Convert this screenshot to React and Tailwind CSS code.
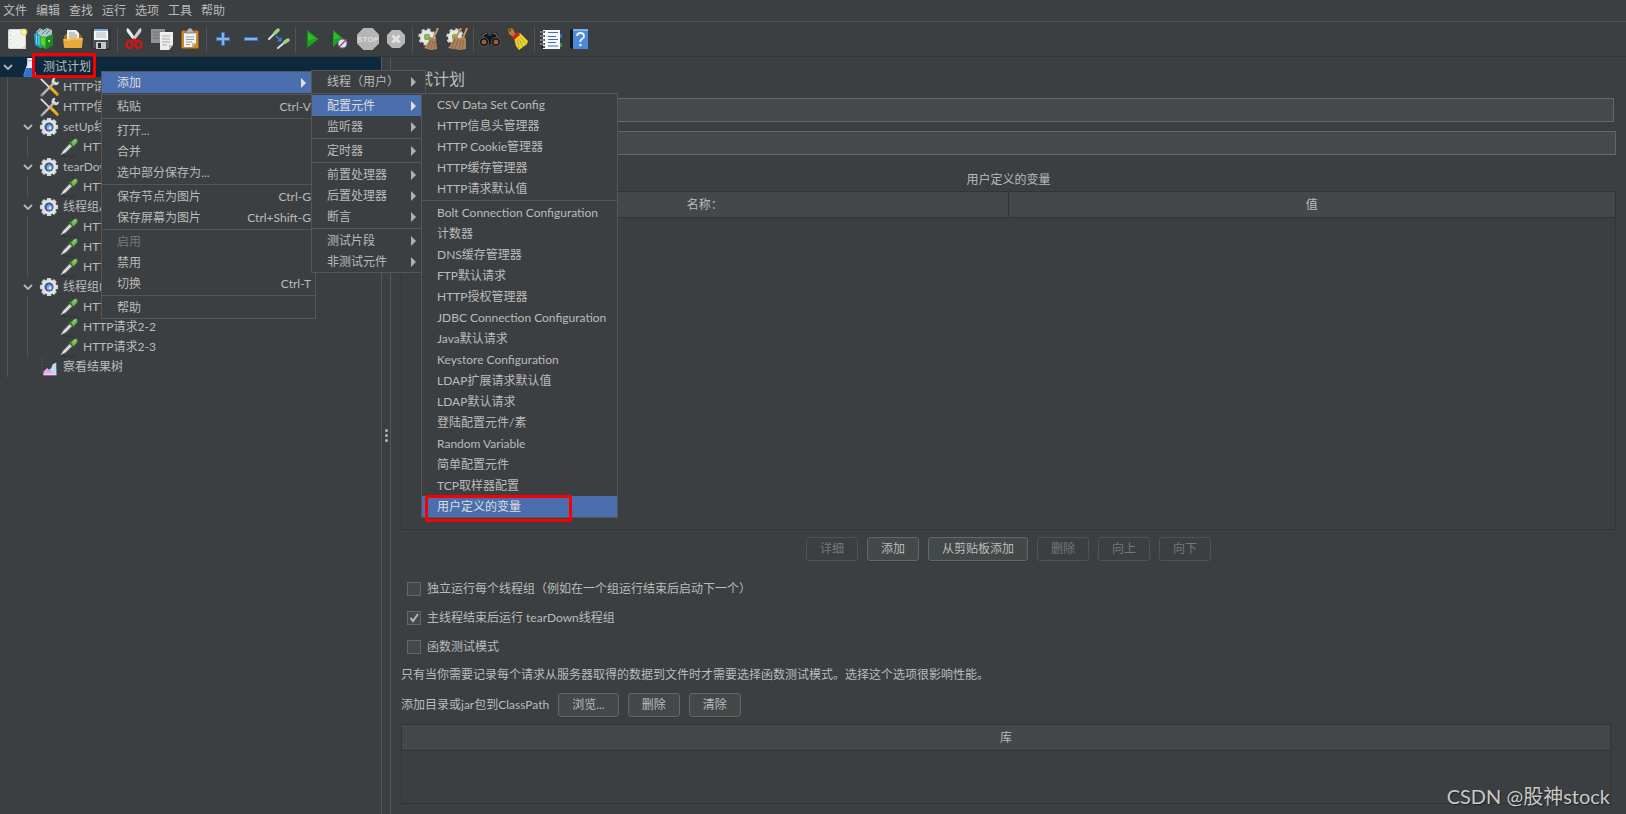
import { useState } from "react";
import clsx from "clsx";

function Icon({ size = 22, children }) {
  return (
    <svg width={size} height={size} viewBox="0 0 22 22" fill="none" aria-hidden="true" className="shrink-0 block">
      {children}
    </svg>
  );
}

// ── Toolbar icons ──
const NewIcon = () => (
  <Icon>
    <rect x="2.5" y="1.5" width="17" height="19" rx="1" fill="#f1f1ef" stroke="#d8d8d4" />
    <path d="M4.5 3v16" stroke="#c9c9c6" strokeDasharray="1 3" />
    <path d="M15 21h5v-5" fill="#d5d5d0" />
    <circle cx="18" cy="4" r="3.5" fill="#f0df5a" opacity=".75" />
    <circle cx="18" cy="4" r="1.8" fill="#fffbd0" />
  </Icon>
);

const TemplatesIcon = () => (
  <Icon>
    <path d="M0 6l5-3 8 1v14l-7 2-5-3z" fill="#1e9ec4" />
    <path d="M2 4l4-4 3 2 4-2 5 2v6l-9 2z" fill="#a9c6cc" />
    <path d="M3 5l4-4M8 6l5-5M12 6l4-4" stroke="#5d7f88" />
    <path d="M2.5 7v9M5 8v9" stroke="#7fd8f0" />
    <path d="M6 8l6 1 7-3v11l-7 4-6-3z" fill="#2fae2a" />
    <path d="M12 9l7-3v11l-7 4z" fill="#1c8a1c" />
    <path d="M7 9l4 1v8l-4-2z" fill="#56d446" />
    <circle cx="15" cy="13" r="1" fill="#c8f5c0" />
  </Icon>
);

const OpenIcon = () => (
  <Icon>
    <path d="M2 8l2-2h14l2 3v10H2z" fill="#a87413" />
    <path d="M5 2h9l3 3v7H5z" fill="#efefed" />
    <path d="M7 5h6M7 7h8M7 9h8" stroke="#9a9a98" />
    <path d="M1 11h6l2-1h12l-1 9q0 1-1 1H3q-1 0-1-1z" fill="#e7a93a" />
    <path d="M2 12h6l2-1h10" stroke="#f7cf7c" />
  </Icon>
);

const SaveIcon = () => (
  <Icon>
    <path d="M2 2h18v19H4l-2-2z" fill="#4b4f55" stroke="#25282b" />
    <rect x="4" y="1" width="14" height="11" fill="#f4f4f4" />
    <path d="M4 1h14v2H4z" fill="#7aa7d9" />
    <path d="M6 5h10M6 7h10M6 9h10" stroke="#b4b8bd" />
    <rect x="6" y="14" width="10" height="7" fill="#c3c6c9" />
    <rect x="8" y="15" width="3" height="5" fill="#2b2d30" />
  </Icon>
);

const CutIcon = () => (
  <Icon>
    <path d="M4 0q-1 2 0 4l7 9 2-2L6 1z" fill="#ededed" />
    <path d="M18 0q1 2 0 4l-7 9-2-2 7-10z" fill="#cfcfcf" />
    <path d="M11 11l-3 3M11 11l3 3" stroke="#c71515" strokeWidth="2.4" />
    <ellipse cx="6.500" cy="16.500" rx="3" ry="3.400" stroke="#d81414" strokeWidth="2.400" />
    <ellipse cx="15.500" cy="16.500" rx="3" ry="3.400" stroke="#d81414" strokeWidth="2.400" />
  </Icon>
);

const CopyIcon = () => (
  <Icon>
    <path d="M0 1h14v14H0z" fill="#8f9294" />
    <path d="M2 4h9M2 7h6M2 10h6" stroke="#6f7274" />
    <path d="M9 4h13v13l-4 5H9z" fill="#eeeeec" />
    <path d="M11 8h8M11 11h8M11 14h8M11 17h5" stroke="#a9a9a7" />
    <path d="M22 17h-4v5z" fill="#bdbdbb" />
  </Icon>
);

const PasteIcon = () => (
  <Icon>
    <rect x="2.5" y="2.5" width="17" height="18" rx="1.5" fill="#c98a2b" stroke="#8f5b10" />
    <path d="M5 5h12v10l-4 4H5z" fill="#f3f3f1" />
    <path d="M7 9h8M7 11.5h8M7 14h6M7 16.5h4" stroke="#9b9b99" />
    <path d="M17 15h-4v4z" fill="#b9b9b6" />
    <path d="M6 5q0-2 2-2 1-3 3-3t3 3q2 0 2 2z" fill="#b7babd" stroke="#585b5e" strokeWidth=".7" />
  </Icon>
);

const PlusIcon = () => (
  <Icon>
    <path d="M9.5 4.500h3v5h5v3h-5v5h-3v-5h-5v-3h5z" fill="#86b3ec" stroke="#3f73bd" />
  </Icon>
);

const MinusIcon = () => (
  <Icon>
    <rect x="4.5" y="9.5" width="13" height="3" fill="#86b3ec" stroke="#3f73bd" />
  </Icon>
);

const ToggleIcon = () => (
  <Icon>
    <path d="M1 11l6-6" stroke="#d8dadb" strokeWidth="2" strokeLinecap="round" />
    <path d="M7 5l3-3" stroke="#9bd07c" strokeWidth="3.5" strokeLinecap="round" />
    <path d="M10 20l7-6" stroke="#d8dadb" strokeWidth="2" strokeLinecap="round" />
    <path d="M17 14l3-2" stroke="#9bd07c" strokeWidth="3.5" strokeLinecap="round" />
    <path d="M8 8l4 4" stroke="#3b83e8" strokeWidth="1.6" />
    <path d="M13.5 9v4.500H9z" fill="#3b83e8" />
  </Icon>
);

const PlayIcon = () => (
  <Icon>
    <path d="M6 2v18l11.500-9z" fill="#1fa21f" />
    <path d="M6 2v18" stroke="#0e6e12" />
    <path d="M7 4.500v8l7-2z" fill="#4fd04a" opacity=".5" />
  </Icon>
);

const PlayNoPauseIcon = () => (
  <Icon>
    <path d="M4 2v17l9.500-9z" fill="#1fa21f" />
    <path d="M5 4.500v7l6-2z" fill="#4fd04a" opacity=".5" />
    <circle cx="13.500" cy="15.500" r="4.500" fill="#dbe7f5" stroke="#4176bd" />
    <path d="M10 19l8-8" stroke="#d83131" strokeWidth="1.300" />
  </Icon>
);

const StopIcon = () => (
  <Icon>
    <path d="M6.500 0h9L22 6.500v9L15.500 22h-9L0 15.500v-9z" fill="#b5b5b5" />
    <text
      x="11"
      y="14"
      textAnchor="middle"
      fontSize="8"
      fontFamily="'Liberation Sans', sans-serif"
      fontWeight="bold"
      fill="#dedede"
    >
      STOP
    </text>
  </Icon>
);

const ShutdownIcon = () => (
  <Icon>
    <path d="M7 2h8l5 5v8l-5 5H7l-5-5V7z" fill="#b7b7b7" />
    <path d="M7.500 7.500l7 7M14.500 7.500l-7 7" stroke="#e2e2e2" strokeWidth="3" />
  </Icon>
);

const GearShape = () => (
  <>
    <circle cx="9" cy="9" r="7" stroke="#cfd0cc" strokeWidth="3.500" strokeDasharray="3 2.500" />
    <circle cx="9" cy="9" r="5" stroke="#e6e7e3" strokeWidth="4" />
    <circle cx="9" cy="9" r="3" fill="#7fc053" />
  </>
);

const ClearIcon = () => (
  <Icon>
    <GearShape />
    <path d="M20 0l-5 11" stroke="#c69468" strokeWidth="2" />
    <path d="M12 9l6 2 1 10-6 1-7-2q4-4 6-11z" fill="#b08660" />
    <path d="M13 12l-3 8M15 13l-2 8M17 13l-1 8" stroke="#805a38" strokeWidth=".8" />
  </Icon>
);

const ClearAllIcon = () => (
  <Icon>
    <GearShape />
    <path d="M15 0l-5 10M21 0l-4 10" stroke="#c69468" strokeWidth="2" />
    <path d="M8 8l5 2 5-1 2 2v10l-6 1-12-2q4-4 6-12z" fill="#b08660" />
    <path d="M9 11l-3 9M12 12l-3 9M15 12l-2 9M18 12l-2 9" stroke="#805a38" strokeWidth=".8" />
  </Icon>
);

const SearchIcon = () => (
  <Icon>
    <path d="M4 5l4-1 2 4h2l2-4 4 1 3 8v3H1v-3z" fill="#15181b" />
    <path d="M5 6l3-1M14 5l3 1M2 12l3-6M20 12l-3-6" stroke="#7b8085" />
    <circle cx="5" cy="14" r="4.500" fill="#101214" stroke="#55595d" />
    <circle cx="17" cy="14" r="4.500" fill="#101214" stroke="#55595d" />
    <circle cx="5" cy="14" r="2.500" fill="#9c5b38" />
    <circle cx="17" cy="14" r="2.500" fill="#9c5b38" />
  </Icon>
);

const SearchResetIcon = () => (
  <Icon>
    <path d="M1 2q2-3 5-1l3 6-3 2-4-3z" fill="#b9782c" />
    <circle cx="3" cy="2.500" r="1" fill="#5b3a12" />
    <path d="M7 10l6-5 8 8-1 3-4 3-4 3-3-4z" fill="#ead52f" />
    <path d="M10 12l2 8M12 11l4 8M13 9l6 7" stroke="#b39913" strokeWidth=".8" />
    <path d="M5 9l6-5 2 3-6 5z" fill="#cc2320" />
  </Icon>
);

const FunctionIcon = () => (
  <Icon>
    <path d="M18 6h4v4h-4z" fill="#3d6fc4" />
    <path d="M18 15h4v4h-4z" fill="#2e9e39" />
    <rect x="3" y="2" width="17" height="19" fill="#f7f7f7" />
    <path d="M1 4h4M1 8h4M1 12h4M1 16h4M1 19h4" stroke="#1c1c1c" strokeWidth="1.600" />
    <path d="M0 4h4M0 8h4M0 12h4M0 16h4" stroke="#e8e8e8" strokeWidth=".8" />
    <path d="M8 4.500h10M8 8.500h8M8 11.500h10M8 14.500h8M8 18h10" stroke="#3f6cb5" strokeWidth="1.200" />
  </Icon>
);

const HelpIcon = () => (
  <Icon>
    <path d="M2 2l3-1v20l-3-1z" fill="#11161d" />
    <rect x="5" y="1" width="15" height="20" fill="#4b8ad8" />
    <path d="M5 1h15v2H5z" fill="#7db0ef" />
    <path d="M9 8q0-3 3.500-3T16 8q0 2-2 3t-1.500 3" stroke="#f2f6fb" strokeWidth="1.800" />
    <circle cx="12.400" cy="17" r="1.200" fill="#f2f6fb" />
  </Icon>
);

// ── Tree icons ──
const FlaskIcon = () => (
  <Icon size={20}>
    <path d="M9 1h6v7l4 12q0 2-2 2H7q-2 0-2-2L9 8z" fill="#e4ecf5" />
    <path d="M8 12h8l3 8q0 2-2 2H7q-2 0-2-2z" fill="#2d74cf" />
    <path d="M9 4h6" stroke="#9fb0c2" />
  </Icon>
);

const ToolsIcon = () => (
  <Icon size={20}>
    <path d="M3 20l12-12" stroke="#8e9293" strokeWidth="3" strokeLinecap="round" />
    <path d="M4 19l11-11" stroke="#d0d3d3" strokeWidth="1.200" />
    <path d="M14 7q-1-4 2-6h2l-1 3 2 2 3-1q0 4-4 4z" fill="#d7d9d9" />
    <path d="M2 2l10 10" stroke="#dfe1e1" strokeWidth="1.800" />
    <path d="M13 12l7 7" stroke="#e3a41b" strokeWidth="3.400" strokeLinecap="round" />
    <path d="M13 11.500l6 6" stroke="#f8cf5c" />
  </Icon>
);

// eight stubby teeth around a light ring
const GearIcon = () => (
  <Icon size={20}>
    <g fill="#d3d5d7">
      {[0, 45, 90, 135].map((a) => (
        <rect key={a} x="8.500" y="1" width="5" height="20" rx="1" transform={`rotate(${a} 11 11)`} />
      ))}
    </g>
    <circle cx="11" cy="11" r="8" fill="#e3e4e6" />
    <circle cx="11" cy="11" r="5" fill="#37598c" />
    <circle cx="11.500" cy="11.500" r="3.200" fill="#7ea6dc" />
    <circle cx="12" cy="12" r="1.500" fill="#d6e6fa" />
  </Icon>
);

const DropperIcon = () => (
  <Icon size={20}>
    <path d="M3 21h16" stroke="#2a2c2d" opacity=".7" />
    <path d="M2 19.500l3-5 7-7 2.500 2.500-7 7z" fill="#c9cccc" stroke="#8f9393" strokeWidth=".7" />
    <path d="M4 18l8-8" stroke="#fff" />
    <path d="M11 5l6 6" stroke="#2f6e24" strokeWidth="2.200" />
    <path d="M13 6q4-5 6-4t1 4l-4 4z" fill="#76b95c" />
    <path d="M16 5l2-2" stroke="#b7e2a2" />
  </Icon>
);

const ChartIcon = () => (
  <Icon size={20}>
    <path d="M3.500 2v18" stroke="#6d7072" strokeDasharray="1 2" />
    <path d="M5 20v-4l4-4 4 4 6-3v7z" fill="#eba6e6" />
    <path d="M11 14q3-1 4-6l4-2v13l-4-1z" fill="#b9dbfb" />
    <path d="M5 20h14v-2H5z" fill="#f5c9ef" />
  </Icon>
);

const Chevron = () => (
  <svg width="10" height="6" viewBox="0 0 10 6" fill="none" aria-hidden="true">
    <path d="M1 1l4 4 4-4" stroke="#b4b4b4" strokeWidth="1.8" />
  </svg>
);

const MENUS = ["文件", "编辑", "查找", "运行", "选项", "工具", "帮助"];

const TOOLBAR = [
  [["新建", NewIcon], ["模板", TemplatesIcon], ["打开", OpenIcon], ["保存", SaveIcon]],
  [["剪切", CutIcon], ["复制", CopyIcon], ["粘贴", PasteIcon]],
  [["展开", PlusIcon], ["折叠", MinusIcon], ["切换", ToggleIcon]],
  [["启动", PlayIcon], ["不停顿启动", PlayNoPauseIcon], ["停止", StopIcon], ["关闭", ShutdownIcon]],
  [["清除", ClearIcon], ["清除全部", ClearAllIcon]],
  [["搜索", SearchIcon], ["重置搜索", SearchResetIcon]],
  [["函数助手", FunctionIcon], ["帮助", HelpIcon]],
];

const TREE = {
  label: "测试计划",
  icon: FlaskIcon,
  selected: true,
  children: [
    { label: "HTTP请求默认值", icon: ToolsIcon },
    { label: "HTTP信息头管理器", icon: ToolsIcon },
    { label: "setUp线程组", icon: GearIcon, children: [{ label: "HTTP请求", icon: DropperIcon }] },
    { label: "tearDown线程组", icon: GearIcon, children: [{ label: "HTTP请求", icon: DropperIcon }] },
    {
      label: "线程组A",
      icon: GearIcon,
      children: [
        { label: "HTTP请求1-1", icon: DropperIcon },
        { label: "HTTP请求1-2", icon: DropperIcon },
        { label: "HTTP请求1-3", icon: DropperIcon },
      ],
    },
    {
      label: "线程组B",
      icon: GearIcon,
      children: [
        { label: "HTTP请求2-1", icon: DropperIcon },
        { label: "HTTP请求2-2", icon: DropperIcon },
        { label: "HTTP请求2-3", icon: DropperIcon },
      ],
    },
    { label: "察看结果树", icon: ChartIcon },
  ],
};

// "-" is a separator
const CONTEXT_MENU = [
  { label: "添加", arrow: true, active: true },
  "-",
  { label: "粘贴", keys: "Ctrl-V" },
  "-",
  { label: "打开..." },
  { label: "合并" },
  { label: "选中部分保存为..." },
  "-",
  { label: "保存节点为图片", keys: "Ctrl-G" },
  { label: "保存屏幕为图片", keys: "Ctrl+Shift-G" },
  "-",
  { label: "启用", disabled: true },
  { label: "禁用" },
  { label: "切换", keys: "Ctrl-T" },
  "-",
  { label: "帮助" },
];

const ADD_MENU = [
  { label: "线程（用户）", arrow: true },
  "-",
  { label: "配置元件", arrow: true, active: true },
  { label: "监听器", arrow: true },
  "-",
  { label: "定时器", arrow: true },
  "-",
  { label: "前置处理器", arrow: true },
  { label: "后置处理器", arrow: true },
  { label: "断言", arrow: true },
  "-",
  { label: "测试片段", arrow: true },
  { label: "非测试元件", arrow: true },
];

const CONFIG_MENU = [
  { label: "CSV Data Set Config" },
  { label: "HTTP信息头管理器" },
  { label: "HTTP Cookie管理器" },
  { label: "HTTP缓存管理器" },
  { label: "HTTP请求默认值" },
  "-",
  { label: "Bolt Connection Configuration" },
  { label: "计数器" },
  { label: "DNS缓存管理器" },
  { label: "FTP默认请求" },
  { label: "HTTP授权管理器" },
  { label: "JDBC Connection Configuration" },
  { label: "Java默认请求" },
  { label: "Keystore Configuration" },
  { label: "LDAP扩展请求默认值" },
  { label: "LDAP默认请求" },
  { label: "登陆配置元件/素" },
  { label: "Random Variable" },
  { label: "简单配置元件" },
  { label: "TCP取样器配置" },
  { label: "用户定义的变量", active: true },
];

function TreeNode({ node }) {
  const NodeIcon = node.icon;
  return (
    <li>
      <div className={clsx("flex h-5 items-center", node.selected ? "bg-[#0d293e]" : "pl-3")}>
        <span className="flex w-[15px] justify-center">{node.children && <Chevron />}</span>
        <span className="ml-1 mr-1 w-5">
          <NodeIcon />
        </span>
        <span className="whitespace-nowrap">{node.label}</span>
      </div>
      {node.children && (
        <ul className={clsx("border-l border-[#525658]", node.selected ? "ml-[7px]" : "ml-[19px]")}>
          {node.children.map((child, i) => (
            <TreeNode key={i} node={child} />
          ))}
        </ul>
      )}
    </li>
  );
}

function PopupMenu({ items, label, className }) {
  return (
    <div role="menu" aria-label={label} className={clsx("absolute border border-[#565656] bg-[#3c3f41]", className)}>
      {items.map((item, i) =>
        item === "-" ? (
          <div key={i} role="separator" className="py-px">
            <div className="h-px bg-[#565656]" />
          </div>
        ) : (
          <button
            key={i}
            type="button"
            role="menuitem"
            disabled={item.disabled}
            className={clsx(
              "flex h-[21px] w-full items-center justify-between pl-[15px] text-left whitespace-nowrap",
              item.arrow ? "pr-2" : "pr-1",
              item.active && "bg-[#4b6eaf] text-[#dddddd]",
              item.disabled && "text-[#777777]"
            )}
          >
            <span>{item.label}</span>
            {item.keys && <span>{item.keys}</span>}
            {item.arrow && (
              <svg width="6" height="10" viewBox="0 0 6 10" aria-hidden="true">
                <path d="M0 0l5 5-5 5z" fill={item.active ? "#e0e0e0" : "#b0b0b0"} />
              </svg>
            )}
          </button>
        )
      )}
    </div>
  );
}

function Button({ children, disabled }) {
  return (
    <button
      type="button"
      disabled={disabled}
      className={clsx(
        "h-6 min-w-[52px] rounded-[3px] border px-[13px]",
        disabled ? "border-[#4f5254] text-[#777777]" : "border-[#646667] bg-[#434849] shadow-[0_1px_1px_#35383a]"
      )}
    >
      {children}
    </button>
  );
}

function Checkbox({ id, label, defaultChecked }) {
  const [checked, setChecked] = useState(Boolean(defaultChecked));
  return (
    <div className="flex h-[29px] items-center gap-1.5 pl-1.5">
      <span className="grid size-3.5">
        <input
          id={id}
          type="checkbox"
          checked={checked}
          onChange={(e) => setChecked(e.target.checked)}
          className="col-start-1 row-start-1 size-3.5 appearance-none border border-[#646667] bg-[#43494a]"
        />
        {checked && (
          <svg viewBox="0 0 14 14" className="pointer-events-none col-start-1 row-start-1 size-3.5" aria-hidden="true">
            <path d="M3.500 7l2.500 3 5-7" stroke="#b4b4b4" strokeWidth="2" fill="none" />
          </svg>
        )}
      </span>
      <label htmlFor={id}>{label}</label>
    </div>
  );
}

export default function App() {
  return (
    <div className="relative flex min-h-screen flex-col overflow-hidden bg-[#3c3f41] font-['Lato','Noto_Sans_CJK_SC',sans-serif] text-[12px] leading-4 text-[#bbbbbb]">
      {/* Menu bar */}
      <nav className="flex h-[22px] items-center gap-[9px] border-b border-[#515151] pl-[3px]">
        {MENUS.map((m) => (
          <button key={m} type="button">{m}</button>
        ))}
      </nav>

      {/* Toolbar */}
      <div role="toolbar" className="flex h-[35px] items-center border-b border-[#323537] pl-[3px]">
        {TOOLBAR.map((group, i) => (
          <div key={i} className="flex items-center">
            {i > 0 && <span className="mx-0.5 h-[25px] w-px bg-[#515456]" />}
            {group.map(([name, ToolIcon]) => (
              <button key={name} type="button" aria-label={name} className="flex w-7 justify-center">
                <ToolIcon />
              </button>
            ))}
          </div>
        ))}
      </div>

      <div className="flex flex-1">
        {/* Test plan tree */}
        <aside className="w-[381px] shrink-0">
          <ul>
            <TreeNode node={TREE} />
          </ul>
        </aside>

        {/* Split pane handle */}
        <div className="flex w-2.5 shrink-0 flex-col items-center justify-center gap-0.5 border-x border-[#555859]">
          <span className="size-[3px] rounded-full bg-[#b8b8b8]" />
          <span className="size-[3px] rounded-full bg-[#b8b8b8]" />
          <span className="size-[3px] rounded-full bg-[#b8b8b8]" />
        </div>

        {/* Editor */}
        <main className="flex min-w-0 flex-1 flex-col pt-3 pr-2.5 pb-2.5 pl-2.5">
          <h1 className="text-[16px] leading-5">测试计划</h1>

          <div className="mt-[9px] flex items-center gap-1 pr-0.5">
            <label htmlFor="name">名称：</label>
            <input id="name" defaultValue="测试计划" className="h-6 min-w-0 flex-1 border border-[#646667] bg-[#45494a] px-1.5" />
          </div>
          <div className="mt-[9px] flex items-center gap-1">
            <label htmlFor="comments">注释：</label>
            <input id="comments" className="h-6 min-w-0 flex-1 border border-[#646667] bg-[#45494a] px-1.5" />
          </div>

          <h2 className="mt-[17px] text-center">用户定义的变量</h2>
          <div className="mt-[3px] flex-1 border border-[#323537]">
            <table className="w-full table-fixed border-separate border-spacing-0">
              <thead>
                <tr className="bg-[#45484a]">
                  <th className="h-[26px] border-r border-b border-[#323537] p-0 font-normal">名称：</th>
                  <th className="h-[26px] border-b border-[#323537] p-0 font-normal">值</th>
                </tr>
              </thead>
            </table>
          </div>

          <div className="mt-[7px] flex justify-center gap-[9px]">
            <Button disabled>详细</Button>
            <Button>添加</Button>
            <Button>从剪贴板添加</Button>
            <Button disabled>删除</Button>
            <Button disabled>向上</Button>
            <Button disabled>向下</Button>
          </div>

          <div className="mt-[13px]">
            <Checkbox id="serialized" label="独立运行每个线程组（例如在一个组运行结束后启动下一个）" />
            <Checkbox id="teardown" label="主线程结束后运行 tearDown线程组" defaultChecked />
            <Checkbox id="functional" label="函数测试模式" />
          </div>
          <p className="mt-1.5">
            只有当你需要记录每个请求从服务器取得的数据到文件时才需要选择函数测试模式。选择这个选项很影响性能。
          </p>

          <div className="mt-2.5 flex items-center gap-[9px]">
            <span>添加目录或jar包到ClassPath</span>
            <Button>浏览...</Button>
            <Button>删除</Button>
            <Button>清除</Button>
          </div>

          <div className="mt-[7px] mr-[5px] h-20 border border-[#323537]">
            <table className="w-full border-separate border-spacing-0">
              <thead>
                <tr className="bg-[#45484a]">
                  <th className="h-[26px] border-b border-[#323537] p-0 font-normal">库</th>
                </tr>
              </thead>
            </table>
          </div>
        </main>
      </div>

      {/* Popup menus */}
      <PopupMenu items={CONTEXT_MENU} label="测试计划" className="top-[71px] left-[101px] w-[215px]" />
      <PopupMenu items={ADD_MENU} label="添加" className="top-[70px] left-[311px] w-[115px]" />
      <PopupMenu items={CONFIG_MENU} label="配置元件" className="top-[93px] left-[421px] w-[197px]" />

      {/* Highlight frames */}
      <div className="pointer-events-none absolute top-[53px] left-8 h-[25px] w-16 rounded-[2px] border-3 border-[#fb0000]" />
      <div className="pointer-events-none absolute top-[495px] left-[425px] h-[27px] w-[147px] rounded-[2px] border-3 border-[#fb0000]" />

      <div className="pointer-events-none absolute right-4 bottom-1 text-[20px] leading-7 text-[#c8c8c8] [text-shadow:1px_1px_1px_#222]">
        CSDN @股神stock
      </div>
    </div>
  );
}
